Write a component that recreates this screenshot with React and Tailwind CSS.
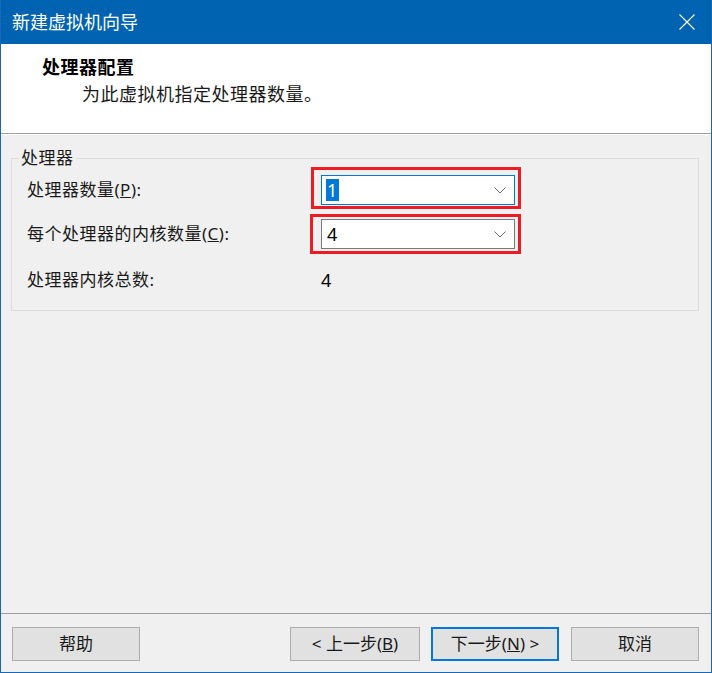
import React from 'react';

const font = { fontFamily: '"Noto Sans", "Noto Sans CJK SC", sans-serif' };

function Chevron() {
    return (
        <svg width="12" height="7" viewBox="0 0 12 7" className="shrink-0">
            <polyline points="0.5,0.5 6,6 11.5,0.5" fill="none" stroke="#6b6b6b" strokeWidth="1" />
        </svg>
    );
}

function Combo({ value, focused }) {
    return (
        <div
            className={`w-[194px] h-[30px] bg-white flex items-center justify-between pl-[4px] pr-[8px] border ${focused ? 'border-[#0078d7]' : 'border-[#7a7a7a]'}`}
        >
            {focused ? (
                <span className="bg-[#0078d7] text-white text-[18px] leading-[22px] px-[1px]">{value}</span>
            ) : (
                <span className="text-black text-[18px] leading-[22px] px-[1px]">{value}</span>
            )}
            <Chevron />
        </div>
    );
}

function Button({ children, primary }) {
    return (
        <button
            className={`w-[128px] h-[34px] bg-[#e1e1e1] text-[17px] text-[#1a1a1a] flex items-center justify-center ${primary ? 'border-2 border-[#0078d7]' : 'border border-[#adadad]'}`}
        >
            {children}
        </button>
    );
}

export default function App() {
    return (
        <div className="w-[712px] h-[673px] flex flex-col bg-[#f0f0f0] border-x border-b border-[#1769b8]" style={font}>
            {/* Title bar */}
            <div className="h-[44px] shrink-0 bg-[#0063b1] flex items-center justify-between pl-[11px] pr-[16px]">
                <span className="text-white text-[18px]">新建虚拟机向导</span>
                <svg width="16" height="16" viewBox="0 0 16 16">
                    <path d="M0.5 0.5 L15.5 15.5 M15.5 0.5 L0.5 15.5" stroke="white" strokeWidth="1.1" />
                </svg>
            </div>

            {/* Header */}
            <div className="h-[90px] shrink-0 bg-white border-b border-[#a0a0a0] pl-[41px] pt-[10px]">
                <div className="text-[18px] font-bold tracking-[0.5px] text-black leading-[26px]">处理器配置</div>
                <div className="text-[18px] tracking-[0.5px] text-[#1a1a1a] leading-[26px] pl-[40px] mt-[1px]">
                    为此虚拟机指定处理器数量。
                </div>
            </div>
            <div className="h-px bg-white shrink-0"></div>

            {/* Body */}
            <div className="flex-1 pt-[23px] pl-[10px] pr-[12px]">
                <div className="relative border border-[#dcdcdc] h-[153px] pl-[15px] pt-[16px]">
                    <span className="absolute left-[7px] -top-[12px] px-[2px] bg-[#f0f0f0] text-[17px] tracking-[0.5px] text-[#1a1a1a] leading-[22px]">
                        处理器
                    </span>

                    <div className="flex flex-col gap-[14px] text-[17px] tracking-[0.5px] text-[#1a1a1a]">
                        <div className="flex items-center h-[30px]">
                            <span className="w-[294px]">
                                处理器数量(<span className="underline">P</span>):
                            </span>
                            <div className="relative">
                                <Combo value="1" focused />
                                <div className="absolute -left-[10px] -top-[8px] w-[210px] h-[42px] border-[3px] border-[#ed1c24]"></div>
                            </div>
                        </div>
                        <div className="flex items-center h-[30px]">
                            <span className="w-[294px]">
                                每个处理器的内核数量(<span className="underline">C</span>):
                            </span>
                            <div className="relative">
                                <Combo value="4" />
                                <div className="absolute -left-[11px] -top-[5px] w-[211px] h-[40px] border-[3px] border-[#ed1c24]"></div>
                            </div>
                        </div>
                        <div className="flex items-center h-[30px] mt-[2px]">
                            <span className="w-[294px]">处理器内核总数:</span>
                            <span className="text-[18px] text-black">4</span>
                        </div>
                    </div>
                </div>
            </div>

            {/* Footer */}
            <div className="shrink-0 border-t border-[#a0a0a0] pt-[13px] pb-[11px] pl-[11px] pr-[12px] flex items-center">
                <Button>帮助</Button>
                <div className="flex-1"></div>
                <div className="w-[130px] h-[34px] bg-[#e1e1e1] border border-[#adadad] text-[17px] text-[#1a1a1a] flex items-center justify-center">
                    &lt; 上一步(<span className="underline">B</span>)
                </div>
                <div className="w-[11px]"></div>
                <Button primary>
                    下一步(<span className="underline">N</span>) &gt;
                </Button>
                <div className="w-[12px]"></div>
                <Button>取消</Button>
            </div>
        </div>
    );
}
